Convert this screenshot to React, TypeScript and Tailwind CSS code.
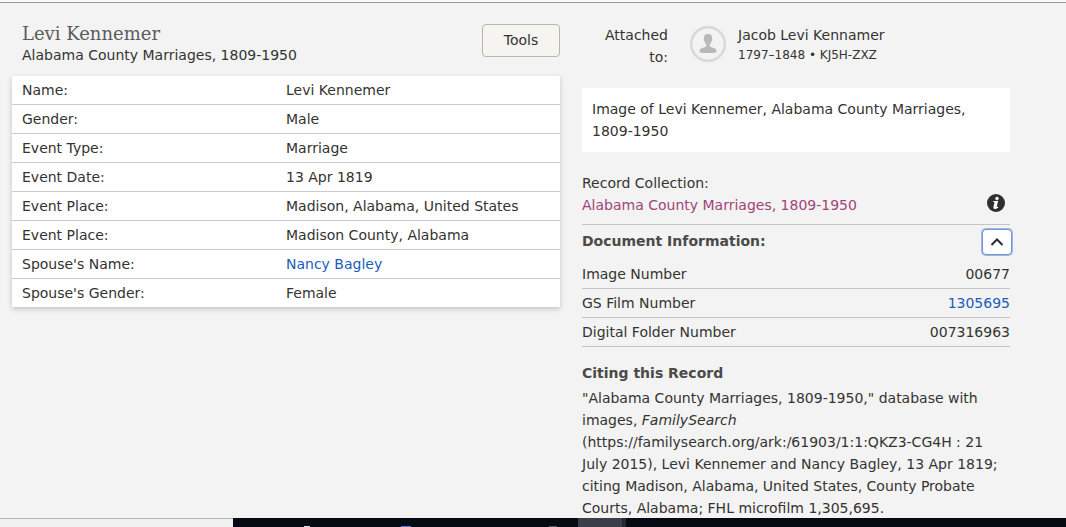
import React from 'react';

type Row = { label: string; value: string; href?: string };

const details: Row[] = [
  { label: 'Name:', value: 'Levi Kennemer' },
  { label: 'Gender:', value: 'Male' },
  { label: 'Event Type:', value: 'Marriage' },
  { label: 'Event Date:', value: '13 Apr 1819' },
  { label: 'Event Place:', value: 'Madison, Alabama, United States' },
  { label: 'Event Place:', value: 'Madison County, Alabama' },
  { label: "Spouse's Name:", value: 'Nancy Bagley', href: '#spouse' },
  { label: "Spouse's Gender:", value: 'Female' },
];

const documentInfo: Row[] = [
  { label: 'Image Number', value: '00677' },
  { label: 'GS Film Number', value: '1305695', href: '#film' },
  { label: 'Digital Folder Number', value: '007316963' },
];

function Value({ row }: { row: Row }) {
  return row.href ? (
    <a href={row.href} className="text-[#1a5cbb]">{row.value}</a>
  ) : (
    <>{row.value}</>
  );
}

function PersonIcon() {
  return (
    <svg viewBox="0 0 36 36" className="size-9 shrink-0" aria-hidden="true">
      <circle cx="18" cy="18" r="16.8" fill="#f3f3f3" stroke="#d8d8d8" strokeWidth="2.4" />
      <path
        d="M18 8c-2.600 0-4.100 1.500-4.100 4 0 .7 0 1-.1 1.600-.1 1 .3 1.600.8 1.900.3 1.300.9 2.300 1.600 3v1.500c-.5 1-2.700 1.500-4.600 2.300C9.800 23.100 9.500 24.300 9.500 26.200c2.400.6 5.200.9 8.500.9s6.100-.3 8.500-.9c0-1.900-.3-3.100-2.100-3.900-1.900-.8-4.100-1.300-4.600-2.300v-1.500c.7-.7 1.300-1.700 1.600-3 .5-.3.9-.9.800-1.900-.1-.6-.1-.9-.1-1.600C22.100 9.500 20.600 8 18 8z"
        fill="#b9b9b9"
      />
    </svg>
  );
}

function InfoIcon() {
  return (
    <svg viewBox="0 0 18 18" className="size-[18px]" aria-hidden="true">
      <circle cx="9" cy="9" r="9" fill="#2f2f2f" />
      <circle cx="10" cy="4.400" r="1.700" fill="#fff" />
      <path d="M6 7.200 11.200 6.800 9.800 12.600c-.1.500.4.500 1.200 0l.4.600c-1 1.200-2.200 1.800-3.400 1.800-1.400 0-1.900-.8-1.600-2l1-4.100c.1-.5-.2-.7-1.600-.8z" fill="#fff" />
    </svg>
  );
}

export default function App() {
  return (
    <div className="flex min-h-screen flex-col bg-[#f3f3f3] font-['DejaVu_Sans',Verdana,sans-serif] text-sm leading-[22px] text-[#333331]">
      <div className="h-[3px] border-b border-[#999] bg-[#fafafa]" />
      <main className="grid flex-1 grid-cols-[137fr_107fr] items-start gap-[22px] pt-[21px] pr-14 pl-3">
        <section>
          <header className="flex items-start justify-between pb-2.5 pl-2.5">
            <div>
              <h1 className="font-['DejaVu_Serif',serif] text-lg leading-5 text-[#5b5b58]">Levi Kennemer</h1>
              <p>Alabama County Marriages, 1809-1950</p>
            </div>
            <button type="button" className="h-[33px] w-[78px] rounded border border-[#b9b7a8] bg-[#f5f4f0] pb-0.5">
              Tools
            </button>
          </header>
          <table className="w-full border-collapse bg-white shadow-[0_2px_5px_rgba(0,0,0,0.2)]">
            <tbody>
              {details.map((row, i) => (
                <tr key={i} className="border-b border-[#cbcbcb] last:border-b-0">
                  <th scope="row" className="w-1/2 py-[3px] pl-2.5 text-left font-normal">{row.label}</th>
                  <td className="py-[3px]"><Value row={row} /></td>
                </tr>
              ))}
            </tbody>
          </table>
        </section>

        <aside>
          <div className="flex items-start">
            <p className="w-[86px] text-right">Attached to:</p>
            <div className="flex items-center gap-3 pl-[22px]">
              <PersonIcon />
              <div>
                <p className="leading-[22px]">Jacob Levi Kennamer</p>
                <p className="text-xs leading-[18px]">1797–1848 • KJ5H-ZXZ</p>
              </div>
            </div>
          </div>

          <p className="mt-5 bg-white p-2.5">Image of Levi Kennemer, Alabama County Marriages, 1809-1950</p>

          <div className="mt-5 flex items-center justify-between border-b border-[#c6c6c6] pb-2">
            <div>
              <p>Record Collection:</p>
              <a href="#collection" className="block text-[#a14379]">Alabama County Marriages, 1809-1950</a>
            </div>
            <button type="button" aria-label="About this collection" className="mt-[18px] mr-[5px]">
              <InfoIcon />
            </button>
          </div>

          <div className="flex h-[35px] items-start justify-between">
            <h2 className="pt-[5px] font-bold text-[#4a4a48]">Document Information:</h2>
            <button
              type="button"
              aria-label="Collapse document information"
              aria-expanded="true"
              className="mt-1 -mr-0.5 flex h-[26px] w-[30px] items-center justify-center rounded border border-[#7396d3] bg-white ring-1 ring-[#9db7e6]"
            >
              <svg viewBox="0 0 14 10" className="h-2.5 w-3.5" aria-hidden="true">
                <path d="M1.500 8 7 2.500 12.500 8" fill="none" stroke="#2b2b2b" strokeWidth="2" />
              </svg>
            </button>
          </div>
          <table className="w-full border-collapse">
            <tbody>
              {documentInfo.map((row) => (
                <tr key={row.label} className="border-b border-[#c6c6c6]">
                  <th scope="row" className="py-[3px] text-left font-normal">{row.label}</th>
                  <td className="py-[3px] text-right"><Value row={row} /></td>
                </tr>
              ))}
            </tbody>
          </table>

          <h2 className="mt-[15px] font-bold text-[#4a4a48]">Citing this Record</h2>
          <p className="mt-[3px]">
            "Alabama County Marriages, 1809-1950," database with images, <em>FamilySearch </em>
            (https://familysearch.org/ark:/61903/1:1:QKZ3-CG4H : 21 July 2015), Levi Kennemer and Nancy Bagley, 13 Apr
            1819; citing Madison, Alabama, United States, County Probate Courts, Alabama; FHL microfilm 1,305,695.
          </p>
        </aside>
      </main>
      <footer className="relative -mt-px flex h-[9px]">
        <div className="w-[233px] border-t border-[#b5b5b5] bg-[#f1f1f1]" />
        <div className="flex flex-1 items-end bg-[#060a12]">
          <div className="ml-[71px] h-px w-1.5 bg-[#d8dade]" />
          <div className="ml-[91px] h-px w-2.5 bg-[#5a78c0]" />
          <div className="ml-[138px] h-px w-2 bg-[#55585f]" />
          <div className="ml-[21px] h-full w-12 border-r-4 border-[#242a33] bg-[#3a3e48]" />
        </div>
      </footer>
    </div>
  );
}
